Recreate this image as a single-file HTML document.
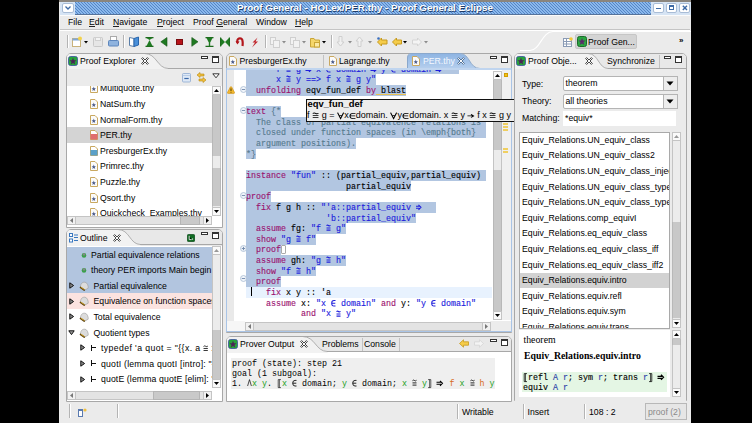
<!DOCTYPE html>
<html><head><meta charset="utf-8">
<style>
*{box-sizing:border-box}
html,body{margin:0;padding:0}
body{width:752px;height:423px;overflow:hidden;background:#000;position:relative;font-family:"Liberation Sans",sans-serif;font-size:8.7px;color:#000}
.a{position:absolute}
.t{position:absolute;white-space:nowrap;line-height:10px}
.vsep{position:absolute;width:2px;border-left:1px solid #b4b4b4;border-right:1px solid #fff}
.clip{position:absolute;overflow:hidden}
</style></head><body>
<!-- window -->
<div class="a" style="left:59px;top:0;width:632px;height:423px;background:#ebebeb"></div>
<div class="a" style="left:59px;top:0;width:632px;height:2px;background:#8a857e"></div><div class="a" style="left:60px;top:14.5px;width:630px;height:1px;background:#fbfbfb"></div>
<!-- title bar -->
<svg class="a" style="left:60px;top:2px" width="591" height="13"><defs><pattern id="tstr" patternUnits="userSpaceOnUse" width="3" height="3"><rect width="3" height="3" fill="#8ab8ec"/><path d="M-1 -1 L4 4 M-1.5 1.5 L1.5 4.5 M1.5 -1.5 L4.5 1.5" stroke="#5585c6" stroke-width="1.0"/></pattern></defs><rect width="591" height="12.5" fill="url(#tstr)"/><rect y="12" width="591" height="1" fill="#56739a"/></svg>
<div class="a" style="left:60px;top:2px;width:15px;height:12.5px;background:#d6e4f4"></div>
<div class="a" style="left:62px;top:3px;width:12px;height:10px;background:#fff;border:1px solid #a8bcd6;border-radius:2px"></div>
<svg class="a" style="left:64px;top:5px" width="8" height="6"><path d="M1.5 1.5 L4 4 L6.5 1.5" stroke="#3d6aa6" stroke-width="1.3" fill="none"/></svg>
<div class="a" style="left:651px;top:2px;width:40px;height:12.5px;background:#d6e4f4"></div>
<div class="a" style="left:653px;top:2.5px;width:11px;height:10px;background:#fff;border:1px solid #a8bcd6;border-radius:2px"></div>
<div class="a" style="left:656px;top:7.5px;width:5px;height:1.5px;background:#3d6aa6"></div>
<div class="a" style="left:666px;top:2.5px;width:11px;height:10px;background:#fff;border:1px solid #a8bcd6;border-radius:2px"></div>
<div class="a" style="left:669px;top:5px;width:5px;height:5px;border:1px solid #3d6aa6;border-top-width:2px"></div>
<div class="a" style="left:679px;top:2.5px;width:11px;height:10px;background:#fff;border:1px solid #a8bcd6;border-radius:2px"></div>
<svg class="a" style="left:681px;top:4px" width="8" height="8"><path d="M1.8 1.8 L6 6 M6 1.8 L1.8 6" stroke="#3d6aa6" stroke-width="1.4"/></svg>
<div class="t" style="left:237px;top:3px;font-weight:bold;font-size:9.8px;color:#fff;text-shadow:0.7px 0.7px 0.6px #1d3b66">Proof General - HOLex/PER.thy - Proof General Eclipse</div>

<!-- menu -->
<div class="t" style="left:68px;top:17px">File</div>
<div class="t" style="left:89px;top:17px">Edit</div>
<div class="t" style="left:113px;top:17px">Navigate</div>
<div class="t" style="left:157px;top:17px">Project</div>
<div class="t" style="left:193px;top:17px">Proof General</div>
<div class="t" style="left:256px;top:17px">Window</div>
<div class="t" style="left:295px;top:17px">Help</div>
<div class="a" style="left:60px;top:29px;width:630px;height:2px;border-top:1px solid #c4c4c4;border-bottom:1px solid #fff"></div>
<div class="a" style="left:89px;top:26px;width:5.8px;height:0.9px;background:#222"></div>
<div class="a" style="left:113px;top:26px;width:6.3px;height:0.9px;background:#222"></div>
<div class="a" style="left:157px;top:26px;width:5.8px;height:0.9px;background:#222"></div>
<div class="a" style="left:216.2px;top:26px;width:6.8px;height:0.9px;background:#222"></div>
<div class="a" style="left:295px;top:26px;width:6.3px;height:0.9px;background:#222"></div>


<!-- toolbar -->
<div class="vsep" style="left:67px;top:35px;height:13px"></div>
<svg class="a" style="left:72px;top:36px" width="18" height="11"><rect x="0.5" y="2.5" width="8" height="8" fill="#fff" stroke="#c9b27a"/><rect x="0.5" y="2.5" width="8" height="2" fill="#7ea6d8"/><circle cx="8" cy="2.5" r="2" fill="#f3d24a"/><path d="M12 5 L16 5 L14 7.5 Z" fill="#000"/></svg>
<svg class="a" style="left:93px;top:37px" width="10" height="10"><rect x="0.5" y="0.5" width="9" height="9" rx="1" fill="#e6e6e6" stroke="#c8c8c8"/><rect x="2.5" y="0.5" width="5" height="3" fill="#f4f4f4" stroke="#d0d0d0"/></svg>
<svg class="a" style="left:108px;top:36px" width="11" height="11"><rect x="2.5" y="0.5" width="6" height="5" fill="#fff" stroke="#aaa"/><rect x="0.5" y="4.5" width="10" height="5.5" rx="1" fill="#8fb3de" stroke="#5d86bd"/></svg>
<div class="vsep" style="left:123px;top:35px;height:13px"></div>
<svg class="a" style="left:129px;top:36px" width="10" height="12"><path d="M0.5 1.5 L5 2.5 L5 10.5 L0.5 9.5 Z" fill="#fff" stroke="#5a7ea8"/><path d="M5 2.5 L9.5 1 L9.5 9 L5 10.5 Z" fill="#4a90d9" stroke="#2a66ad"/></svg>
<svg class="a" style="left:145px;top:37px" width="9" height="10"><path d="M0.5 0.5 H8.5 M0.5 9.5 H8.5" stroke="#1d6b1d" stroke-width="1.4"/><path d="M1.5 9 L4.5 3 L7.5 9 Z" fill="#1f7a22"/><path d="M1.5 1 L4.5 3 L7.5 1Z" fill="#1f7a22"/></svg>
<svg class="a" style="left:160px;top:37px" width="8" height="10"><path d="M7 0.5 L0.8 4.8 L7 9.3 Z" fill="#1f7a22" stroke="#145214" stroke-width="0.6"/></svg>
<div class="a" style="left:176px;top:38.5px;width:6.5px;height:6.5px;background:#b8141a;border:0.5px solid #7a0d10"></div>
<svg class="a" style="left:191px;top:37px" width="8" height="10"><path d="M0.8 0.5 L7 4.8 L0.8 9.3 Z" fill="#1f7a22" stroke="#145214" stroke-width="0.6"/></svg>
<svg class="a" style="left:205px;top:37px" width="9" height="10"><path d="M0.5 0.5 H8.5 M0.5 9.5 H8.5" stroke="#1d6b1d" stroke-width="1.4"/><path d="M1.5 1 L4.5 7 L7.5 1 Z" fill="#1f7a22"/><path d="M3.8 6 H5.2 V9 H3.8Z" fill="#1f7a22"/></svg>
<svg class="a" style="left:220px;top:37px" width="10" height="10"><path d="M0.5 0.5 V9.5 M9.5 0.5 V9.5" stroke="#1d6b1d" stroke-width="1.4"/><path d="M1 1 L5 5 L1 9Z M9 1 L5 5 L9 9Z" fill="#1f7a22"/></svg>
<svg class="a" style="left:235px;top:37px" width="10" height="10"><path d="M2.5 6 C1.5 2 4 0.8 6 1.5 C8 2.3 8 5 7.5 9" stroke="#b3161b" stroke-width="2.2" fill="none"/><path d="M0.5 4 L2.5 7.5 L4.5 4.5Z" fill="#b3161b"/></svg>
<svg class="a" style="left:251px;top:37px" width="8" height="11"><path d="M6.5 0.5 L1.5 5.5 L4 5.5 L1 10.5 L7 4.5 L4.5 4.5 Z" fill="#c0242a"/></svg>
<div class="vsep" style="left:265px;top:35px;height:13px"></div>
<svg class="a" style="left:270px;top:37px" width="17" height="11"><rect x="0.5" y="0.5" width="5" height="7" fill="#f2f2f2" stroke="#cfcfcf"/><rect x="3.5" y="3.5" width="6" height="7" fill="#f2f2f2" stroke="#cfcfcf"/><path d="M12 4 L16 4 L14 6.5Z" fill="#8c8c8c"/></svg>
<svg class="a" style="left:290px;top:37px" width="17" height="11"><rect x="0.5" y="0.5" width="5" height="7" fill="#f2f2f2" stroke="#cfcfcf"/><rect x="3.5" y="3.5" width="6" height="7" fill="#f2f2f2" stroke="#cfcfcf"/><path d="M12 4 L16 4 L14 6.5Z" fill="#8c8c8c"/></svg>
<svg class="a" style="left:310px;top:37px" width="17" height="11"><path d="M0.5 1.5 H4 L5 3 H9.5 V10 H0.5Z" fill="#f5d66a" stroke="#c9a537"/><rect x="4.5" y="5.5" width="5" height="4.5" fill="#fbe9a6" stroke="#c9a537"/><path d="M12 4 L16 4 L14 6.5Z" fill="#000"/></svg>
<div class="vsep" style="left:331px;top:35px;height:13px"></div>
<svg class="a" style="left:336px;top:36px" width="17" height="12"><path d="M3 0.5 H6 V6 H8 L4.5 10 L1 6 H3Z" fill="#f0f0f0" stroke="#cfcfcf"/><path d="M12 5 L16 5 L14 7.5Z" fill="#8c8c8c"/></svg>
<svg class="a" style="left:355px;top:36px" width="17" height="12"><path d="M3 10.5 H6 V5 H8 L4.5 1 L1 5 H3Z" fill="#f0f0f0" stroke="#cfcfcf"/><path d="M13 5 L17 5 L15 7.5Z" fill="#8c8c8c"/></svg>
<svg class="a" style="left:377px;top:37px" width="11" height="10"><path d="M0.5 5 L4.5 1 V3 H10 V7 H4.5 V9 Z" fill="#f5cc4a" stroke="#c79a1e"/><circle cx="1.5" cy="1.5" r="1.3" fill="#3b6fc0"/></svg>
<svg class="a" style="left:392px;top:37px" width="16" height="10"><path d="M0.5 5 L4.5 1 V3 H9.5 V7 H4.5 V9 Z" fill="#f5cc4a" stroke="#c79a1e"/><path d="M11 4 L15 4 L13 6.5Z" fill="#000"/></svg>
<svg class="a" style="left:412px;top:37px" width="17" height="10"><path d="M9.5 5 L5.5 1 V3 H0.5 V7 H5.5 V9 Z" fill="#f4f4f4" stroke="#d4d4d4"/><path d="M12 4 L16 4 L14 6.5Z" fill="#8c8c8c"/></svg>
<!-- perspective bar -->
<svg class="a" style="left:520px;top:30px" width="171" height="24"><path d="M0 20.5 H10 C20 20.5 22 1.5 33 1.5 H171" stroke="#fff" stroke-width="1.1" fill="none"/></svg>
<svg class="a" style="left:563px;top:37px" width="10" height="10"><rect x="0.5" y="1.5" width="8" height="8" fill="#fff" stroke="#8a9bb5"/><path d="M0.5 4.5 H8.5 M0.5 7 H8.5 M3.5 1.5 V9.5" stroke="#8a9bb5"/><circle cx="8" cy="2" r="1.8" fill="#f3c93a"/></svg>
<div class="a" style="left:575px;top:34px;width:62px;height:15px;background:#d4d4d4;border:1px solid #c6c6c6;border-radius:2px"></div>
<svg class="a" style="left:577px;top:36px" width="10" height="11"><rect x="0.5" y="0.5" width="9" height="10" rx="2" fill="#2aa640" stroke="#1a6b2a"/><path d="M5 2 L6 4.6 L8.6 4.6 L6.5 6.3 L7.3 9 L5 7.4 L2.7 9 L3.5 6.3 L1.4 4.6 L4 4.6Z" fill="#5a2a6a"/></svg>
<div class="t" style="left:588px;top:37px">Proof Gen...</div>
<div class="t" style="left:679px;top:36px;font-size:8px;font-weight:bold">»</div>
<div class="a" style="left:65.5px;top:52.5px;width:157px;height:175px;background:#fff;border:1px solid #a8a8a8;border-radius:5px 5px 0 0"></div><div class="a" style="left:66.5px;top:53.5px;width:155px;height:15.5px;background:#e8e8e8;border-radius:4px 4px 0 0"></div><svg class="a" style="left:65.5px;top:52.5px" width="105.5" height="17.5"><path d="M1 16.5 V5 Q1 1 5 1 H79.50 C91.00 1 91.00 15.50 102.50 15.50 V17.5 H1Z" fill="#f2f2f2"/><path d="M78.50 0.5 C91.00 0.5 91.00 15.50 102.50 15.50 H105.5" stroke="#a8a8a8" stroke-width="0.9" fill="none"/></svg><div class="a" style="left:168px;top:67.5px;width:53.5px;height:1px;background:#a8a8a8"></div><svg class="a" style="left:68px;top:56px" width="10" height="10"><rect x="0.5" y="0.5" width="9" height="9" rx="2" fill="#27a23c" stroke="#3a4fa0" stroke-width="0.8"/><path d="M5 1.8 L6 4.2 L8.4 4.3 L6.5 5.9 L7.2 8.4 L5 7 L2.8 8.4 L3.5 5.9 L1.6 4.3 L4 4.2Z" fill="#4a2455"/></svg><div class="t" style="left:80px;top:54.99px;font-size:8.7px;line-height:12px;color:#000;">Proof Explorer</div><svg class="a" style="left:140.5px;top:56.5px" width="8" height="8"><path d="M0.6 1.6 L1.6 0.6 L4 3 L6.4 0.6 L7.4 1.6 L5 4 L7.4 6.4 L6.4 7.4 L4 5 L1.6 7.4 L0.6 6.4 L3 4Z" fill="#fafafa" stroke="#333" stroke-width="0.9" stroke-linejoin="round"/></svg><div class="a" style="left:200.5px;top:55.5px;width:7px;height:3px;border:1px solid #333;background:#fff"></div><div class="a" style="left:211.5px;top:55.5px;width:7px;height:7px;border:1px solid #333;border-top-width:2px;background:#fff"></div><div class="a" style="left:66.5px;top:68.5px;width:155px;height:17px;background:#ebebeb"></div><svg class="a" style="left:182px;top:72.5px" width="10" height="10"><rect x="0.5" y="0.5" width="8" height="8.5" rx="1" fill="#dde8f6" stroke="#8eaad0" stroke-width="0.8"/><path d="M0.5 2.5 H8.5" stroke="#aec4e2" stroke-width="0.8"/><path d="M2.3 5.5 H6.7" stroke="#3a68a8" stroke-width="1.2"/></svg><svg class="a" style="left:196px;top:72px" width="11" height="11"><path d="M1 3 L4 0.5 V2 H8 V4 H4 V5.5Z" fill="#f0c040" stroke="#b8860b" stroke-width="0.6"/><path d="M10 8 L7 10.5 V9 H3 V7 H7 V5.5Z" fill="#f0c040" stroke="#b8860b" stroke-width="0.6"/></svg><svg class="a" style="left:212px;top:73px" width="8" height="6"><path d="M0.8 0.8 H7.2 L4 4.8Z" fill="#fff" stroke="#222" stroke-width="0.9"/></svg><div class="clip" style="left:66.5px;top:86px;width:145px;height:129.5px;background:#fff"><svg class="a" style="left:23.5px;top:-2.5999999999999943px" width="8" height="10"><path d="M0.5 0.5 H5 L7.5 3 V9.5 H0.5Z" fill="#fbfbfb" stroke="#c9a860"/><path d="M3.8 3.5 L4.4 5.2 L6 5.3 L4.8 6.3 L5.2 8 L3.8 7 L2.4 8 L2.8 6.3 L1.6 5.3 L3.2 5.2Z" fill="#4a5a8a"/></svg><div class="t" style="left:33.5px;top:-3.61px;font-size:8.7px;line-height:12px;color:#000;">Multiquote.thy</div><svg class="a" style="left:23.5px;top:13.0px" width="8" height="10"><path d="M0.5 0.5 H5 L7.5 3 V9.5 H0.5Z" fill="#fbfbfb" stroke="#c9a860"/><path d="M3.8 3.5 L4.4 5.2 L6 5.3 L4.8 6.3 L5.2 8 L3.8 7 L2.4 8 L2.8 6.3 L1.6 5.3 L3.2 5.2Z" fill="#4a5a8a"/></svg><div class="t" style="left:33.5px;top:11.99px;font-size:8.7px;line-height:12px;color:#000;">NatSum.thy</div><svg class="a" style="left:23.5px;top:28.60000000000001px" width="8" height="10"><path d="M0.5 0.5 H5 L7.5 3 V9.5 H0.5Z" fill="#fbfbfb" stroke="#c9a860"/><path d="M3.8 3.5 L4.4 5.2 L6 5.3 L4.8 6.3 L5.2 8 L3.8 7 L2.4 8 L2.8 6.3 L1.6 5.3 L3.2 5.2Z" fill="#4a5a8a"/></svg><div class="t" style="left:33.5px;top:27.59px;font-size:8.7px;line-height:12px;color:#000;">NormalForm.thy</div><div class="a" style="left:0;top:41.0px;width:145px;height:16px;background:#d4d4d4"></div><svg class="a" style="left:23.5px;top:44.19999999999999px" width="8" height="10"><path d="M0.5 0.5 H5 L7.5 3 V9.5 H0.5Z" fill="#fff" stroke="#c9a860"/><rect x="0.5" y="4" width="7" height="5.5" fill="#e06e6e"/></svg><div class="t" style="left:33.5px;top:43.19px;font-size:8.7px;line-height:12px;color:#000;">PER.thy</div><svg class="a" style="left:23.5px;top:59.80000000000001px" width="8" height="10"><path d="M0.5 0.5 H5 L7.5 3 V9.5 H0.5Z" fill="#fff" stroke="#c9a860"/><rect x="0.5" y="4" width="7" height="5.5" fill="#5aa0c8"/></svg><div class="t" style="left:33.5px;top:58.79px;font-size:8.7px;line-height:12px;color:#000;">PresburgerEx.thy</div><svg class="a" style="left:23.5px;top:75.4px" width="8" height="10"><path d="M0.5 0.5 H5 L7.5 3 V9.5 H0.5Z" fill="#fbfbfb" stroke="#c9a860"/><path d="M3.8 3.5 L4.4 5.2 L6 5.3 L4.8 6.3 L5.2 8 L3.8 7 L2.4 8 L2.8 6.3 L1.6 5.3 L3.2 5.2Z" fill="#4a5a8a"/></svg><div class="t" style="left:33.5px;top:74.39px;font-size:8.7px;line-height:12px;color:#000;">Primrec.thy</div><svg class="a" style="left:23.5px;top:91.0px" width="8" height="10"><path d="M0.5 0.5 H5 L7.5 3 V9.5 H0.5Z" fill="#fbfbfb" stroke="#c9a860"/><path d="M3.8 3.5 L4.4 5.2 L6 5.3 L4.8 6.3 L5.2 8 L3.8 7 L2.4 8 L2.8 6.3 L1.6 5.3 L3.2 5.2Z" fill="#4a5a8a"/></svg><div class="t" style="left:33.5px;top:89.99px;font-size:8.7px;line-height:12px;color:#000;">Puzzle.thy</div><svg class="a" style="left:23.5px;top:106.60000000000002px" width="8" height="10"><path d="M0.5 0.5 H5 L7.5 3 V9.5 H0.5Z" fill="#fbfbfb" stroke="#c9a860"/><path d="M3.8 3.5 L4.4 5.2 L6 5.3 L4.8 6.3 L5.2 8 L3.8 7 L2.4 8 L2.8 6.3 L1.6 5.3 L3.2 5.2Z" fill="#4a5a8a"/></svg><div class="t" style="left:33.5px;top:105.59px;font-size:8.7px;line-height:12px;color:#000;">Qsort.thy</div><svg class="a" style="left:23.5px;top:122.19999999999999px" width="8" height="10"><path d="M0.5 0.5 H5 L7.5 3 V9.5 H0.5Z" fill="#fbfbfb" stroke="#c9a860"/><path d="M3.8 3.5 L4.4 5.2 L6 5.3 L4.8 6.3 L5.2 8 L3.8 7 L2.4 8 L2.8 6.3 L1.6 5.3 L3.2 5.2Z" fill="#4a5a8a"/></svg><div class="t" style="left:33.5px;top:121.19px;font-size:8.7px;line-height:12px;color:#000;">Quickcheck_Examples.thy</div></div><div class="a" style="left:211.5px;top:85.5px;width:9px;height:130px;background:#ececec;border:1px solid #c4c4c4"></div><div class="a" style="left:211.5px;top:94.5px;width:9px;height:61.5px;background:#c8c8c8;border-left:1px solid #b8b8b8;border-right:1px solid #b8b8b8"></div><div class="a" style="left:211.5px;top:168px;width:9px;height:38px;background:#c8c8c8;border-left:1px solid #b8b8b8;border-right:1px solid #b8b8b8"></div><div class="a" style="left:211.5px;top:85.5px;width:9px;height:9px;background:#fafafa;border:1px solid #c4c4c4"></div><div class="a" style="left:211.5px;top:206.5px;width:9px;height:9px;background:#fafafa;border:1px solid #c4c4c4"></div><svg class="a" style="left:211.5px;top:85.5px" width="9" height="9"><path d="M2 6 L4.5 3 L7 6Z" fill="#000"/></svg><svg class="a" style="left:211.5px;top:206.5px" width="9" height="9"><path d="M2 3 L4.5 6 L7 3Z" fill="#000"/></svg><div class="a" style="left:66.5px;top:216px;width:145px;height:9px;background:#e3e3e3;border:1px solid #c4c4c4"></div><div class="a" style="left:180px;top:216px;width:20px;height:9px;background:#c9c9c9;border:1px solid #b5b5b5"></div><div class="a" style="left:66.5px;top:216px;width:9px;height:9px;background:#f1f1f1;border:1px solid #c4c4c4"></div><div class="a" style="left:202.5px;top:216px;width:9px;height:9px;background:#f1f1f1;border:1px solid #c4c4c4"></div><svg class="a" style="left:66.5px;top:216px" width="9" height="9"><path d="M6 2 L3 4.5 L6 7Z" fill="#777"/></svg><svg class="a" style="left:202.5px;top:216px" width="9" height="9"><path d="M3 2 L6 4.5 L3 7Z" fill="#000"/></svg><div class="a" style="left:65.5px;top:229px;width:157px;height:172.5px;background:#fff;border:1px solid #a8a8a8;border-radius:5px 5px 0 0"></div><div class="a" style="left:66.5px;top:230px;width:155px;height:15.5px;background:#e8e8e8;border-radius:4px 4px 0 0"></div><svg class="a" style="left:65.5px;top:229px" width="77.5" height="17.5"><path d="M1 16.5 V5 Q1 1 5 1 H53.00 C63.75 1 63.75 15.50 74.50 15.50 V17.5 H1Z" fill="#f2f2f2"/><path d="M52.00 0.5 C63.75 0.5 63.75 15.50 74.50 15.50 H77.5" stroke="#a8a8a8" stroke-width="0.9" fill="none"/></svg><div class="a" style="left:140px;top:244.0px;width:81.5px;height:1px;background:#a8a8a8"></div><svg class="a" style="left:69px;top:233px" width="9" height="10"><rect x="0.5" y="0.5" width="3" height="3" fill="#fff" stroke="#3a78c0"/><rect x="0.5" y="6" width="3" height="3" fill="#fff" stroke="#3a78c0"/><path d="M5 2 H9 M5 4.5 H9 M5 7.5 H9" stroke="#3a78c0"/></svg><div class="t" style="left:80px;top:231.99px;font-size:8.7px;line-height:12px;color:#000;">Outline</div><svg class="a" style="left:113px;top:234px" width="8" height="8"><path d="M0.6 1.6 L1.6 0.6 L4 3 L6.4 0.6 L7.4 1.6 L5 4 L7.4 6.4 L6.4 7.4 L4 5 L1.6 7.4 L0.6 6.4 L3 4Z" fill="#fafafa" stroke="#333" stroke-width="0.9" stroke-linejoin="round"/></svg><svg class="a" style="left:186.5px;top:233.5px" width="8" height="8"><rect x="0.4" y="0.4" width="7.2" height="7.2" rx="1.2" fill="#0f6a22" stroke="#0a4a18" stroke-width="0.8"/><path d="M2.2 1.8 V5.6 H4.6 M5.6 4.4 V5.8" stroke="#e8f0e8" stroke-width="0.9"/></svg><div class="a" style="left:200.5px;top:232px;width:7px;height:3px;border:1px solid #333;background:#fff"></div><div class="a" style="left:211.5px;top:232px;width:7px;height:7px;border:1px solid #333;border-top-width:2px;background:#fff"></div><div class="clip" style="left:66.5px;top:245.5px;width:145px;height:142px;background:#fff"><div class="a" style="left:0;top:1.1px;width:145px;height:15.6px;background:#b2c5df"></div><svg class="a" style="left:14.5px;top:6.1px" width="6" height="6"><circle cx="3" cy="3.4" r="2.3" fill="#3aa04a"/><circle cx="3" cy="2.4" r="1.2" fill="#888"/></svg><div class="t" style="left:24.5px;top:3.09px;font-size:8.7px;line-height:12px;color:#000;">Partial equivalence relations</div><div class="a" style="left:0;top:16.7px;width:145px;height:15.6px;background:#b2c5df"></div><svg class="a" style="left:14.5px;top:21.7px" width="6" height="6"><circle cx="3" cy="3.4" r="2.3" fill="#3aa04a"/><circle cx="3" cy="2.4" r="1.2" fill="#888"/></svg><div class="t" style="left:24.5px;top:18.69px;font-size:8.7px;line-height:12px;color:#000;">theory PER imports Main begin</div><div class="a" style="left:0;top:32.3px;width:145px;height:15.6px;background:#b2c5df"></div><svg class="a" style="left:2.5px;top:36.5px" width="6" height="7"><path d="M0.8 0.8 L4.6 3.5 L0.8 6.2Z" fill="#8a8a8a" stroke="#111" stroke-width="1"/></svg><svg class="a" style="left:12.0px;top:35.3px" width="10" height="10"><path d="M1.5 6 C1.5 2 4 1 6 1.2 C8 1.5 9.5 4.5 9.2 7.2 L5.5 9.2Z" fill="#dcdcdc" stroke="#9a9a9a" stroke-width="0.6"/><path d="M1 6.2 L5.8 9.5" stroke="#5a4010" stroke-width="1.6"/><path d="M1.8 6.2 L5.6 8.6" stroke="#e8b830" stroke-width="0.8"/></svg><div class="t" style="left:27.0px;top:34.29px;font-size:8.7px;line-height:12px;color:#000;">Partial equivalence</div><div class="a" style="left:0;top:47.9px;width:145px;height:15.6px;background:#fbe3e0"></div><svg class="a" style="left:2.5px;top:52.1px" width="6" height="7"><path d="M0.8 0.8 L4.6 3.5 L0.8 6.2Z" fill="#8a8a8a" stroke="#111" stroke-width="1"/></svg><svg class="a" style="left:12.0px;top:50.9px" width="10" height="10"><path d="M1.5 6 C1.5 2 4 1 6 1.2 C8 1.5 9.5 4.5 9.2 7.2 L5.5 9.2Z" fill="#dcdcdc" stroke="#9a9a9a" stroke-width="0.6"/><path d="M1 6.2 L5.8 9.5" stroke="#5a4010" stroke-width="1.6"/><path d="M1.8 6.2 L5.6 8.6" stroke="#e8b830" stroke-width="0.8"/></svg><div class="t" style="left:27.0px;top:49.89px;font-size:8.7px;line-height:12px;color:#000;">Equivalence on function spaces</div><svg class="a" style="left:2.5px;top:67.7px" width="6" height="7"><path d="M0.8 0.8 L4.6 3.5 L0.8 6.2Z" fill="#8a8a8a" stroke="#111" stroke-width="1"/></svg><svg class="a" style="left:12.0px;top:66.5px" width="10" height="10"><path d="M1.5 6 C1.5 2 4 1 6 1.2 C8 1.5 9.5 4.5 9.2 7.2 L5.5 9.2Z" fill="#dcdcdc" stroke="#9a9a9a" stroke-width="0.6"/><path d="M1 6.2 L5.8 9.5" stroke="#5a4010" stroke-width="1.6"/><path d="M1.8 6.2 L5.6 8.6" stroke="#e8b830" stroke-width="0.8"/></svg><div class="t" style="left:27.0px;top:65.49px;font-size:8.7px;line-height:12px;color:#000;">Total equivalence</div><svg class="a" style="left:1.5px;top:84.3px" width="7" height="6"><path d="M0.8 0.8 H6.2 L3.5 4.6Z" fill="#9a9a9a" stroke="#111" stroke-width="1"/></svg><svg class="a" style="left:12.0px;top:82.1px" width="10" height="10"><path d="M1.5 6 C1.5 2 4 1 6 1.2 C8 1.5 9.5 4.5 9.2 7.2 L5.5 9.2Z" fill="#dcdcdc" stroke="#9a9a9a" stroke-width="0.6"/><path d="M1 6.2 L5.8 9.5" stroke="#5a4010" stroke-width="1.6"/><path d="M1.8 6.2 L5.6 8.6" stroke="#e8b830" stroke-width="0.8"/></svg><div class="t" style="left:27.0px;top:81.09px;font-size:8.7px;line-height:12px;color:#000;">Quotient types</div><svg class="a" style="left:13.5px;top:98.9px" width="6" height="7"><path d="M0.8 0.8 L4.6 3.5 L0.8 6.2Z" fill="#8a8a8a" stroke="#111" stroke-width="1"/></svg><div class="a" style="left:24.5px;top:99.2px;width:1px;height:6px;background:#111"></div><div class="a" style="left:24.5px;top:101.9px;width:5px;height:1px;background:#111"></div><div class="t" style="left:34.5px;top:96.69px;font-size:8.7px;line-height:12px;color:#000;letter-spacing:0.4px">typedef &#x27;a quot = &quot;{{x. a <svg style="display:inline-block;vertical-align:-1.74px;overflow:visible" width="5.39" height="9.13" viewBox="0 0 5 10" preserveAspectRatio="none"><path d="M0.5 2.7 Q1.5 1.6 2.5 2.5 Q3.5 3.4 4.5 2.3 M0.5 4.9 H4.5 M0.5 7.1 H4.5" stroke="#000" stroke-width="0.8" fill="none"/></svg> x} | a. True}&quot;</div><svg class="a" style="left:13.5px;top:114.5px" width="6" height="7"><path d="M0.8 0.8 L4.6 3.5 L0.8 6.2Z" fill="#8a8a8a" stroke="#111" stroke-width="1"/></svg><div class="a" style="left:24.5px;top:114.8px;width:1px;height:6px;background:#111"></div><div class="a" style="left:24.5px;top:117.5px;width:5px;height:1px;background:#111"></div><div class="t" style="left:34.5px;top:112.29px;font-size:8.7px;line-height:12px;color:#000;letter-spacing:0.22px">quotI (lemma quotI [intro]: &quot;{x. a <svg style="display:inline-block;vertical-align:-1.74px;overflow:visible" width="5.39" height="9.13" viewBox="0 0 5 10" preserveAspectRatio="none"><path d="M0.5 2.7 Q1.5 1.6 2.5 2.5 Q3.5 3.4 4.5 2.3 M0.5 4.9 H4.5 M0.5 7.1 H4.5" stroke="#000" stroke-width="0.8" fill="none"/></svg> x}</div><svg class="a" style="left:13.5px;top:130.1px" width="6" height="7"><path d="M0.8 0.8 L4.6 3.5 L0.8 6.2Z" fill="#8a8a8a" stroke="#111" stroke-width="1"/></svg><div class="a" style="left:24.5px;top:130.4px;width:1px;height:6px;background:#111"></div><div class="a" style="left:24.5px;top:133.1px;width:5px;height:1px;background:#111"></div><div class="t" style="left:34.5px;top:127.89px;font-size:8.7px;line-height:12px;color:#000;letter-spacing:0.12px">quotE (lemma quotE [elim]: "R</div></div><div class="a" style="left:211.5px;top:245.5px;width:9px;height:142px;background:#ececec;border:1px solid #c4c4c4"></div><div class="a" style="left:211.5px;top:329.5px;width:9px;height:49px;background:#c8c8c8;border-left:1px solid #b8b8b8;border-right:1px solid #b8b8b8"></div><div class="a" style="left:211.5px;top:245.5px;width:9px;height:9px;background:#fafafa;border:1px solid #c4c4c4"></div><div class="a" style="left:211.5px;top:378.5px;width:9px;height:9px;background:#fafafa;border:1px solid #c4c4c4"></div><svg class="a" style="left:211.5px;top:245.5px" width="9" height="9"><path d="M2 6 L4.5 3 L7 6Z" fill="#999"/></svg><svg class="a" style="left:211.5px;top:378.5px" width="9" height="9"><path d="M2 3 L4.5 6 L7 3Z" fill="#000"/></svg><div class="a" style="left:66.5px;top:390.5px;width:145px;height:9px;background:#e3e3e3;border:1px solid #c4c4c4"></div><div class="a" style="left:153px;top:390.5px;width:47px;height:9px;background:#c9c9c9;border:1px solid #b5b5b5"></div><div class="a" style="left:66.5px;top:390.5px;width:9px;height:9px;background:#f1f1f1;border:1px solid #c4c4c4"></div><div class="a" style="left:202.5px;top:390.5px;width:9px;height:9px;background:#f1f1f1;border:1px solid #c4c4c4"></div><svg class="a" style="left:66.5px;top:390.5px" width="9" height="9"><path d="M6 2 L3 4.5 L6 7Z" fill="#777"/></svg><svg class="a" style="left:202.5px;top:390.5px" width="9" height="9"><path d="M3 2 L6 4.5 L3 7Z" fill="#000"/></svg><div class="vsep" style="left:69px;top:404px;height:14px"></div><div class="vsep" style="left:117px;top:404px;height:14px"></div><svg class="a" style="left:78px;top:408px" width="10" height="9"><rect x="0.5" y="1.5" width="4" height="7" fill="#fff" stroke="#5a7ab0"/><rect x="0.5" y="1.5" width="4" height="1.5" fill="#5a7ab0"/><circle cx="7" cy="2" r="1.6" fill="#f0c040"/></svg><div class="a" style="left:225.5px;top:52.5px;width:286px;height:280px;background:#ebebeb;border:1px solid #a8a8a8;border-radius:5px 5px 0 0"></div><div class="a" style="left:226.5px;top:53.5px;width:284px;height:15px;background:#e8e8e8;border-radius:4px 4px 0 0"></div><div class="a" style="left:323px;top:55px;width:1px;height:13px;background:#c2c2c2"></div><svg class="a" style="left:229px;top:56px" width="8" height="10"><path d="M0.5 0.5 H5 L7.5 3 V9.5 H0.5Z" fill="#fbfbfb" stroke="#c9a860"/><path d="M3.8 3.5 L4.4 5.2 L6 5.3 L4.8 6.3 L5.2 8 L3.8 7 L2.4 8 L2.8 6.3 L1.6 5.3 L3.2 5.2Z" fill="#4a5a8a"/></svg><div class="t" style="left:239.5px;top:54.99px;font-size:8.7px;line-height:12px;color:#000;">PresburgerEx.thy</div><svg class="a" style="left:329px;top:56px" width="8" height="10"><path d="M0.5 0.5 H5 L7.5 3 V9.5 H0.5Z" fill="#fbfbfb" stroke="#c9a860"/><path d="M3.8 3.5 L4.4 5.2 L6 5.3 L4.8 6.3 L5.2 8 L3.8 7 L2.4 8 L2.8 6.3 L1.6 5.3 L3.2 5.2Z" fill="#4a5a8a"/></svg><div class="t" style="left:339px;top:54.99px;font-size:8.7px;line-height:12px;color:#000;">Lagrange.thy</div><svg class="a" style="left:406px;top:52.5px" width="76" height="18"><defs><linearGradient id="gt" x1="0" y1="0" x2="0" y2="1"><stop offset="0" stop-color="#8fb5e3"/><stop offset="1" stop-color="#bcd3ef"/></linearGradient></defs><path d="M1.5 17 V5 Q1.5 1 5.5 1 H54 C64 1 63 15.5 74 15.5 H76 V18 H1.5Z" fill="url(#gt)"/><path d="M1.5 15.5 V5 Q1.5 0.5 5.5 0.5 H54 C64 0.5 63 15.5 74 15.5 H76" stroke="#8aa8cc" fill="none"/></svg><svg class="a" style="left:412px;top:56px" width="8" height="10"><path d="M0.5 0.5 H5 L7.5 3 V9.5 H0.5Z" fill="#fbfbfb" stroke="#c9a860"/><path d="M3.8 3.5 L4.4 5.2 L6 5.3 L4.8 6.3 L5.2 8 L3.8 7 L2.4 8 L2.8 6.3 L1.6 5.3 L3.2 5.2Z" fill="#4a5a8a"/></svg><div class="t" style="left:423px;top:54.99px;font-size:8.7px;line-height:12px;color:#f4f8ff;">PER.thy</div><svg class="a" style="left:456.5px;top:56.5px" width="8" height="8"><path d="M0.6 1.6 L1.6 0.6 L4 3 L6.4 0.6 L7.4 1.6 L5 4 L7.4 6.4 L6.4 7.4 L4 5 L1.6 7.4 L0.6 6.4 L3 4Z" fill="#fafafa" stroke="#4a6a90" stroke-width="0.9" stroke-linejoin="round"/></svg><div class="a" style="left:489.5px;top:55.5px;width:7px;height:3px;border:1px solid #333;background:#fff"></div><div class="a" style="left:500.5px;top:55.5px;width:7px;height:7px;border:1px solid #333;border-top-width:2px;background:#fff"></div><div class="a" style="left:226.5px;top:68px;width:284px;height:1.6px;background:#c0d5ef"></div><div class="a" style="left:226.5px;top:69.6px;width:284px;height:262px;background:#fff"></div><div class="a" style="left:226px;top:68px;width:0.8px;height:264px;background:#a9c4e6"></div><div class="a" style="left:510.5px;top:68px;width:1px;height:264px;background:#a9c4e6"></div><div class="a" style="left:226px;top:331px;width:285.5px;height:1px;background:#a9c4e6"></div><div class="a" style="left:226.8px;top:69.6px;width:7px;height:251px;background:#e9e9e9"></div><div class="a" style="left:502px;top:70px;width:9px;height:250px;background:#f0f0f0"></div><div class="a" style="left:503.5px;top:73px;width:4px;height:4px;background:#f2c21a;border:0.5px solid #d19d00"></div><div class="a" style="left:503px;top:123px;width:5px;height:1.5px;background:#f0cf60"></div><div class="a" style="left:503px;top:126px;width:5px;height:1.5px;background:#f0cf60"></div><div class="a" style="left:503px;top:129px;width:5px;height:1.5px;background:#f0cf60"></div><div class="a" style="left:503px;top:148px;width:5px;height:1.5px;background:#f0cf60"></div><div class="a" style="left:503px;top:151px;width:5px;height:1.5px;background:#f0cf60"></div><div class="a" style="left:492.5px;top:70.5px;width:9px;height:249.5px;background:#ececec;border:1px solid #c4c4c4"></div><div class="a" style="left:492.5px;top:79.5px;width:9px;height:70.5px;background:#c8c8c8;border-left:1px solid #b8b8b8;border-right:1px solid #b8b8b8"></div><div class="a" style="left:492.5px;top:170px;width:9px;height:141px;background:#c8c8c8;border-left:1px solid #b8b8b8;border-right:1px solid #b8b8b8"></div><div class="a" style="left:492.5px;top:70.5px;width:9px;height:9px;background:#fafafa;border:1px solid #c4c4c4"></div><div class="a" style="left:492.5px;top:311.0px;width:9px;height:9px;background:#fafafa;border:1px solid #c4c4c4"></div><svg class="a" style="left:492.5px;top:70.5px" width="9" height="9"><path d="M2 6 L4.5 3 L7 6Z" fill="#000"/></svg><svg class="a" style="left:492.5px;top:311.0px" width="9" height="9"><path d="M2 3 L4.5 6 L7 3Z" fill="#000"/></svg><div class="a" style="left:490px;top:320.5px;width:20.5px;height:10.5px;background:#ececec"></div><div class="a" style="left:226.8px;top:320.5px;width:18.2px;height:10.5px;background:#f6f6f6"></div><div class="a" style="left:245px;top:322px;width:246px;height:9px;background:#e3e3e3;border:1px solid #c4c4c4"></div><div class="a" style="left:245px;top:322px;width:9px;height:9px;background:#f1f1f1;border:1px solid #c4c4c4"></div><div class="a" style="left:482px;top:322px;width:9px;height:9px;background:#f1f1f1;border:1px solid #c4c4c4"></div><svg class="a" style="left:245px;top:322px" width="9" height="9"><path d="M6 2 L3 4.5 L6 7Z" fill="#777"/></svg><svg class="a" style="left:482px;top:322px" width="9" height="9"><path d="M3 2 L6 4.5 L3 7Z" fill="#777"/></svg><div class="clip" style="left:234px;top:69.6px;width:258px;height:250.9px"><div class="a" style="left:0;top:-1.1px;width:258px;height:252px"><div class="a" style="left:11.5px;top:218.54px;width:246px;height:10.6px;background:#e8f2fe"></div><div class="a" style="left:11.5px;top:-4.90px;width:213.0px;height:10.69px;background:#b2c6e1"></div><div class="a" style="left:11.5px;top:5.74px;width:130.5px;height:10.69px;background:#b2c6e1"></div><div class="a" style="left:11.5px;top:16.38px;width:160.5px;height:10.69px;background:#b2c6e1"></div><div class="a" style="left:11.5px;top:37.66px;width:35.5px;height:10.69px;background:#b2c6e1"></div><div class="a" style="left:11.5px;top:48.30px;width:240.5px;height:10.69px;background:#b2c6e1"></div><div class="a" style="left:11.5px;top:58.94px;width:240.5px;height:10.69px;background:#b2c6e1"></div><div class="a" style="left:11.5px;top:69.58px;width:110.5px;height:10.69px;background:#b2c6e1"></div><div class="a" style="left:11.5px;top:80.22px;width:10.5px;height:10.69px;background:#b2c6e1"></div><div class="a" style="left:11.5px;top:101.50px;width:240.5px;height:10.69px;background:#b2c6e1"></div><div class="a" style="left:11.5px;top:112.14px;width:165.5px;height:10.69px;background:#b2c6e1"></div><div class="a" style="left:11.5px;top:122.78px;width:25.5px;height:10.69px;background:#b2c6e1"></div><div class="a" style="left:11.5px;top:133.42px;width:190.5px;height:10.69px;background:#b2c6e1"></div><div class="a" style="left:11.5px;top:144.06px;width:170.5px;height:10.69px;background:#b2c6e1"></div><div class="a" style="left:11.5px;top:154.70px;width:100.5px;height:10.69px;background:#b2c6e1"></div><div class="a" style="left:11.5px;top:165.34px;width:70.5px;height:10.69px;background:#b2c6e1"></div><div class="a" style="left:11.5px;top:175.98px;width:35.5px;height:10.69px;background:#b2c6e1"></div><div class="a" style="left:11.5px;top:186.62px;width:100.5px;height:10.69px;background:#b2c6e1"></div><div class="a" style="left:11.5px;top:197.26px;width:70.5px;height:10.69px;background:#b2c6e1"></div><div class="a" style="left:11.5px;top:207.90px;width:35.5px;height:10.69px;background:#b2c6e1"></div><div class="t" style="left:42.0px;top:-4.92px;font-size:8.33px;line-height:12px;color:#2020dc;font-family:'Liberation Mono',monospace;-webkit-text-stroke:0.12px currentColor;">f</div><svg class="a" style="left:52.00px;top:-4.70px;overflow:visible" width="5.0" height="10" viewBox="0 0 5.000 10" preserveAspectRatio="none"><path d="M0.5 2.7 Q1.5 1.6 2.5 2.5 Q3.5 3.4 4.5 2.3 M0.5 4.9 H4.5 M0.5 7.1 H4.5" stroke="#2020dc" stroke-width="1.05" fill="none"/></svg><div class="t" style="left:62.0px;top:-4.92px;font-size:8.33px;line-height:12px;color:#2020dc;font-family:'Liberation Mono',monospace;-webkit-text-stroke:0.12px currentColor;">g</div><svg class="a" style="left:72.00px;top:-4.70px;overflow:visible" width="5.0" height="10" viewBox="0 0 5.000 10" preserveAspectRatio="none"><path d="M-0.5 4.3 H4 M-0.5 6.3 H4 M3 2.8 L5.5 5.3 L3 7.8" stroke="#2020dc" stroke-width="1.3125" fill="none"/></svg><div class="t" style="left:82.0px;top:-4.92px;font-size:8.33px;line-height:12px;color:#2020dc;font-family:'Liberation Mono',monospace;-webkit-text-stroke:0.12px currentColor;">x</div><svg class="a" style="left:92.00px;top:-4.70px;overflow:visible" width="5.0" height="10" viewBox="0 0 5.000 10" preserveAspectRatio="none"><path d="M4.5 2.4 H3 Q0.7 2.4 0.7 5.2 Q0.7 8 3 8 H4.5 M0.8 5.2 H4.3" stroke="#2020dc" stroke-width="1.05" fill="none"/></svg><div class="t" style="left:102.0px;top:-4.92px;font-size:8.33px;line-height:12px;color:#2020dc;font-family:'Liberation Mono',monospace;-webkit-text-stroke:0.12px currentColor;">domain</div><svg class="a" style="left:137.00px;top:-4.70px;overflow:visible" width="5.0" height="10" viewBox="0 0 5.000 10" preserveAspectRatio="none"><path d="M-0.5 4.3 H4 M-0.5 6.3 H4 M3 2.8 L5.5 5.3 L3 7.8" stroke="#2020dc" stroke-width="1.3125" fill="none"/></svg><div class="t" style="left:147.0px;top:-4.92px;font-size:8.33px;line-height:12px;color:#2020dc;font-family:'Liberation Mono',monospace;-webkit-text-stroke:0.12px currentColor;">y</div><svg class="a" style="left:157.00px;top:-4.70px;overflow:visible" width="5.0" height="10" viewBox="0 0 5.000 10" preserveAspectRatio="none"><path d="M4.5 2.4 H3 Q0.7 2.4 0.7 5.2 Q0.7 8 3 8 H4.5 M0.8 5.2 H4.3" stroke="#2020dc" stroke-width="1.05" fill="none"/></svg><div class="t" style="left:167.0px;top:-4.92px;font-size:8.33px;line-height:12px;color:#2020dc;font-family:'Liberation Mono',monospace;-webkit-text-stroke:0.12px currentColor;">domain</div><svg class="a" style="left:202.00px;top:-4.70px;overflow:visible" width="5.0" height="10" viewBox="0 0 5.000 10" preserveAspectRatio="none"><path d="M-0.5 4.3 H4 M-0.5 6.3 H4 M3 2.8 L5.5 5.3 L3 7.8" stroke="#2020dc" stroke-width="1.3125" fill="none"/></svg><div class="t" style="left:42.0px;top:5.72px;font-size:8.33px;line-height:12px;color:#2020dc;font-family:'Liberation Mono',monospace;-webkit-text-stroke:0.12px currentColor;">x</div><svg class="a" style="left:52.00px;top:5.94px;overflow:visible" width="5.0" height="10" viewBox="0 0 5.000 10" preserveAspectRatio="none"><path d="M0.5 2.7 Q1.5 1.6 2.5 2.5 Q3.5 3.4 4.5 2.3 M0.5 4.9 H4.5 M0.5 7.1 H4.5" stroke="#2020dc" stroke-width="1.05" fill="none"/></svg><div class="t" style="left:62.0px;top:5.72px;font-size:8.33px;line-height:12px;color:#2020dc;font-family:'Liberation Mono',monospace;-webkit-text-stroke:0.12px currentColor;">y ==&gt; f x</div><svg class="a" style="left:112.00px;top:5.94px;overflow:visible" width="5.0" height="10" viewBox="0 0 5.000 10" preserveAspectRatio="none"><path d="M0.5 2.7 Q1.5 1.6 2.5 2.5 Q3.5 3.4 4.5 2.3 M0.5 4.9 H4.5 M0.5 7.1 H4.5" stroke="#2020dc" stroke-width="1.05" fill="none"/></svg><div class="t" style="left:122.0px;top:5.72px;font-size:8.33px;line-height:12px;color:#2020dc;font-family:'Liberation Mono',monospace;-webkit-text-stroke:0.12px currentColor;">g y&quot;</div><div class="t" style="left:22.0px;top:16.36px;font-size:8.33px;line-height:12px;color:#9a0f6e;font-family:'Liberation Mono',monospace;-webkit-text-stroke:0.12px currentColor;">unfolding</div><div class="t" style="left:72.0px;top:16.36px;font-size:8.33px;line-height:12px;color:#000;font-family:'Liberation Mono',monospace;-webkit-text-stroke:0.12px currentColor;">eqv_fun_def</div><div class="t" style="left:132.0px;top:16.36px;font-size:8.33px;line-height:12px;color:#9a0f6e;font-family:'Liberation Mono',monospace;-webkit-text-stroke:0.12px currentColor;">by</div><div class="t" style="left:147.0px;top:16.36px;font-size:8.33px;line-height:12px;color:#000;font-family:'Liberation Mono',monospace;-webkit-text-stroke:0.12px currentColor;">blast</div><div class="t" style="left:12.0px;top:37.64px;font-size:8.33px;line-height:12px;color:#9a0f6e;font-family:'Liberation Mono',monospace;-webkit-text-stroke:0.12px currentColor;">text</div><div class="t" style="left:37.0px;top:37.64px;font-size:8.33px;line-height:12px;color:#557a8e;font-family:'Liberation Mono',monospace;-webkit-text-stroke:0.12px currentColor;">{*</div><div class="t" style="left:22.0px;top:48.28px;font-size:8.33px;line-height:12px;color:#557a8e;font-family:'Liberation Mono',monospace;-webkit-text-stroke:0.12px currentColor;">The class of partial equivalence relations is</div><div class="t" style="left:22.0px;top:58.92px;font-size:8.33px;line-height:12px;color:#557a8e;font-family:'Liberation Mono',monospace;-webkit-text-stroke:0.12px currentColor;">closed under function spaces (in \emph{both}</div><div class="t" style="left:22.0px;top:69.56px;font-size:8.33px;line-height:12px;color:#557a8e;font-family:'Liberation Mono',monospace;-webkit-text-stroke:0.12px currentColor;">argument positions).</div><div class="t" style="left:12.0px;top:80.20px;font-size:8.33px;line-height:12px;color:#557a8e;font-family:'Liberation Mono',monospace;-webkit-text-stroke:0.12px currentColor;">*}</div><div class="t" style="left:12.0px;top:101.48px;font-size:8.33px;line-height:12px;color:#9a0f6e;font-family:'Liberation Mono',monospace;-webkit-text-stroke:0.12px currentColor;">instance</div><div class="t" style="left:57.0px;top:101.48px;font-size:8.33px;line-height:12px;color:#2020dc;font-family:'Liberation Mono',monospace;-webkit-text-stroke:0.12px currentColor;">&quot;fun&quot;</div><div class="t" style="left:87.0px;top:101.48px;font-size:8.33px;line-height:12px;color:#000;font-family:'Liberation Mono',monospace;-webkit-text-stroke:0.12px currentColor;">:: (partial_equiv,partial_equiv)</div><div class="t" style="left:112.0px;top:112.12px;font-size:8.33px;line-height:12px;color:#000;font-family:'Liberation Mono',monospace;-webkit-text-stroke:0.12px currentColor;">partial_equiv</div><div class="t" style="left:12.0px;top:122.76px;font-size:8.33px;line-height:12px;color:#9a0f6e;font-family:'Liberation Mono',monospace;-webkit-text-stroke:0.12px currentColor;">proof</div><div class="t" style="left:22.0px;top:133.40px;font-size:8.33px;line-height:12px;color:#9a0f6e;font-family:'Liberation Mono',monospace;-webkit-text-stroke:0.12px currentColor;">fix</div><div class="t" style="left:42.0px;top:133.40px;font-size:8.33px;line-height:12px;color:#000;font-family:'Liberation Mono',monospace;-webkit-text-stroke:0.12px currentColor;">f g h ::</div><div class="t" style="left:87.0px;top:133.40px;font-size:8.33px;line-height:12px;color:#2020dc;font-family:'Liberation Mono',monospace;-webkit-text-stroke:0.12px currentColor;">&quot;&#x27;a::partial_equiv</div><svg class="a" style="left:182.00px;top:133.62px;overflow:visible" width="5.0" height="10" viewBox="0 0 5.000 10" preserveAspectRatio="none"><path d="M0 4.3 H3.5 M0 6.3 H3.5 M2.5 2.8 L5 5.3 L2.5 7.8" stroke="#2020dc" stroke-width="1.05" fill="none"/></svg><div class="t" style="left:92.0px;top:144.04px;font-size:8.33px;line-height:12px;color:#2020dc;font-family:'Liberation Mono',monospace;-webkit-text-stroke:0.12px currentColor;">&#x27;b::partial_equiv&quot;</div><div class="t" style="left:22.0px;top:154.68px;font-size:8.33px;line-height:12px;color:#9a0f6e;font-family:'Liberation Mono',monospace;-webkit-text-stroke:0.12px currentColor;">assume</div><div class="t" style="left:57.0px;top:154.68px;font-size:8.33px;line-height:12px;color:#000;font-family:'Liberation Mono',monospace;-webkit-text-stroke:0.12px currentColor;">fg:</div><div class="t" style="left:77.0px;top:154.68px;font-size:8.33px;line-height:12px;color:#2020dc;font-family:'Liberation Mono',monospace;-webkit-text-stroke:0.12px currentColor;">&quot;f</div><svg class="a" style="left:92.00px;top:154.90px;overflow:visible" width="5.0" height="10" viewBox="0 0 5.000 10" preserveAspectRatio="none"><path d="M0.5 2.7 Q1.5 1.6 2.5 2.5 Q3.5 3.4 4.5 2.3 M0.5 4.9 H4.5 M0.5 7.1 H4.5" stroke="#2020dc" stroke-width="1.05" fill="none"/></svg><div class="t" style="left:102.0px;top:154.68px;font-size:8.33px;line-height:12px;color:#2020dc;font-family:'Liberation Mono',monospace;-webkit-text-stroke:0.12px currentColor;">g&quot;</div><div class="t" style="left:22.0px;top:165.32px;font-size:8.33px;line-height:12px;color:#9a0f6e;font-family:'Liberation Mono',monospace;-webkit-text-stroke:0.12px currentColor;">show</div><div class="t" style="left:47.0px;top:165.32px;font-size:8.33px;line-height:12px;color:#2020dc;font-family:'Liberation Mono',monospace;-webkit-text-stroke:0.12px currentColor;">&quot;g</div><svg class="a" style="left:62.00px;top:165.54px;overflow:visible" width="5.0" height="10" viewBox="0 0 5.000 10" preserveAspectRatio="none"><path d="M0.5 2.7 Q1.5 1.6 2.5 2.5 Q3.5 3.4 4.5 2.3 M0.5 4.9 H4.5 M0.5 7.1 H4.5" stroke="#2020dc" stroke-width="1.05" fill="none"/></svg><div class="t" style="left:72.0px;top:165.32px;font-size:8.33px;line-height:12px;color:#2020dc;font-family:'Liberation Mono',monospace;-webkit-text-stroke:0.12px currentColor;">f&quot;</div><div class="t" style="left:22.0px;top:175.96px;font-size:8.33px;line-height:12px;color:#9a0f6e;font-family:'Liberation Mono',monospace;-webkit-text-stroke:0.12px currentColor;">proof</div><div class="t" style="left:22.0px;top:186.60px;font-size:8.33px;line-height:12px;color:#9a0f6e;font-family:'Liberation Mono',monospace;-webkit-text-stroke:0.12px currentColor;">assume</div><div class="t" style="left:57.0px;top:186.60px;font-size:8.33px;line-height:12px;color:#000;font-family:'Liberation Mono',monospace;-webkit-text-stroke:0.12px currentColor;">gh:</div><div class="t" style="left:77.0px;top:186.60px;font-size:8.33px;line-height:12px;color:#2020dc;font-family:'Liberation Mono',monospace;-webkit-text-stroke:0.12px currentColor;">&quot;g</div><svg class="a" style="left:92.00px;top:186.82px;overflow:visible" width="5.0" height="10" viewBox="0 0 5.000 10" preserveAspectRatio="none"><path d="M0.5 2.7 Q1.5 1.6 2.5 2.5 Q3.5 3.4 4.5 2.3 M0.5 4.9 H4.5 M0.5 7.1 H4.5" stroke="#2020dc" stroke-width="1.05" fill="none"/></svg><div class="t" style="left:102.0px;top:186.60px;font-size:8.33px;line-height:12px;color:#2020dc;font-family:'Liberation Mono',monospace;-webkit-text-stroke:0.12px currentColor;">h&quot;</div><div class="t" style="left:22.0px;top:197.24px;font-size:8.33px;line-height:12px;color:#9a0f6e;font-family:'Liberation Mono',monospace;-webkit-text-stroke:0.12px currentColor;">show</div><div class="t" style="left:47.0px;top:197.24px;font-size:8.33px;line-height:12px;color:#2020dc;font-family:'Liberation Mono',monospace;-webkit-text-stroke:0.12px currentColor;">&quot;f</div><svg class="a" style="left:62.00px;top:197.46px;overflow:visible" width="5.0" height="10" viewBox="0 0 5.000 10" preserveAspectRatio="none"><path d="M0.5 2.7 Q1.5 1.6 2.5 2.5 Q3.5 3.4 4.5 2.3 M0.5 4.9 H4.5 M0.5 7.1 H4.5" stroke="#2020dc" stroke-width="1.05" fill="none"/></svg><div class="t" style="left:72.0px;top:197.24px;font-size:8.33px;line-height:12px;color:#2020dc;font-family:'Liberation Mono',monospace;-webkit-text-stroke:0.12px currentColor;">h&quot;</div><div class="t" style="left:22.0px;top:207.88px;font-size:8.33px;line-height:12px;color:#9a0f6e;font-family:'Liberation Mono',monospace;-webkit-text-stroke:0.12px currentColor;">proof</div><div class="t" style="left:32.0px;top:218.52px;font-size:8.33px;line-height:12px;color:#9a0f6e;font-family:'Liberation Mono',monospace;-webkit-text-stroke:0.12px currentColor;">fix</div><div class="t" style="left:52.0px;top:218.52px;font-size:8.33px;line-height:12px;color:#000;font-family:'Liberation Mono',monospace;-webkit-text-stroke:0.12px currentColor;">x y :: &#x27;a</div><div class="t" style="left:32.0px;top:229.16px;font-size:8.33px;line-height:12px;color:#9a0f6e;font-family:'Liberation Mono',monospace;-webkit-text-stroke:0.12px currentColor;">assume</div><div class="t" style="left:67.0px;top:229.16px;font-size:8.33px;line-height:12px;color:#000;font-family:'Liberation Mono',monospace;-webkit-text-stroke:0.12px currentColor;">x:</div><div class="t" style="left:82.0px;top:229.16px;font-size:8.33px;line-height:12px;color:#2020dc;font-family:'Liberation Mono',monospace;-webkit-text-stroke:0.12px currentColor;">&quot;x</div><svg class="a" style="left:97.00px;top:229.38px;overflow:visible" width="5.0" height="10" viewBox="0 0 5.000 10" preserveAspectRatio="none"><path d="M4.5 2.4 H3 Q0.7 2.4 0.7 5.2 Q0.7 8 3 8 H4.5 M0.8 5.2 H4.3" stroke="#2020dc" stroke-width="1.05" fill="none"/></svg><div class="t" style="left:107.0px;top:229.16px;font-size:8.33px;line-height:12px;color:#2020dc;font-family:'Liberation Mono',monospace;-webkit-text-stroke:0.12px currentColor;">domain&quot;</div><div class="t" style="left:147.0px;top:229.16px;font-size:8.33px;line-height:12px;color:#9a0f6e;font-family:'Liberation Mono',monospace;-webkit-text-stroke:0.12px currentColor;">and</div><div class="t" style="left:167.0px;top:229.16px;font-size:8.33px;line-height:12px;color:#000;font-family:'Liberation Mono',monospace;-webkit-text-stroke:0.12px currentColor;">y:</div><div class="t" style="left:182.0px;top:229.16px;font-size:8.33px;line-height:12px;color:#2020dc;font-family:'Liberation Mono',monospace;-webkit-text-stroke:0.12px currentColor;">&quot;y</div><svg class="a" style="left:197.00px;top:229.38px;overflow:visible" width="5.0" height="10" viewBox="0 0 5.000 10" preserveAspectRatio="none"><path d="M4.5 2.4 H3 Q0.7 2.4 0.7 5.2 Q0.7 8 3 8 H4.5 M0.8 5.2 H4.3" stroke="#2020dc" stroke-width="1.05" fill="none"/></svg><div class="t" style="left:207.0px;top:229.16px;font-size:8.33px;line-height:12px;color:#2020dc;font-family:'Liberation Mono',monospace;-webkit-text-stroke:0.12px currentColor;">domain&quot;</div><div class="t" style="left:67.0px;top:239.80px;font-size:8.33px;line-height:12px;color:#9a0f6e;font-family:'Liberation Mono',monospace;-webkit-text-stroke:0.12px currentColor;">and</div><div class="t" style="left:87.0px;top:239.80px;font-size:8.33px;line-height:12px;color:#2020dc;font-family:'Liberation Mono',monospace;-webkit-text-stroke:0.12px currentColor;">&quot;x</div><svg class="a" style="left:102.00px;top:240.02px;overflow:visible" width="5.0" height="10" viewBox="0 0 5.000 10" preserveAspectRatio="none"><path d="M0.5 2.7 Q1.5 1.6 2.5 2.5 Q3.5 3.4 4.5 2.3 M0.5 4.9 H4.5 M0.5 7.1 H4.5" stroke="#2020dc" stroke-width="1.05" fill="none"/></svg><div class="t" style="left:112.0px;top:239.80px;font-size:8.33px;line-height:12px;color:#2020dc;font-family:'Liberation Mono',monospace;-webkit-text-stroke:0.12px currentColor;">y&quot;</div><div class="a" style="left:16.5px;top:218.5px;width:1.2px;height:9px;background:#000"></div><div class="a" style="left:47px;top:176.5px;width:5px;height:9px;background:#fff;border:0.5px solid #aaa;border-radius:1px"></div><div class="a" style="left:142px;top:25.099999999999994px;width:30px;height:1px;background:#e8c050"></div></div></div><svg class="a" style="left:239.5px;top:85.8px" width="7" height="7"><circle cx="3.5" cy="3.5" r="3" fill="#f0f4fa" stroke="#a9bbd2" stroke-width="0.8"/><path d="M1.8 3.5 H5.2" stroke="#6f88aa" stroke-width="0.9"/></svg><svg class="a" style="left:239.5px;top:106.8px" width="7" height="7"><circle cx="3.5" cy="3.5" r="3" fill="#f0f4fa" stroke="#a9bbd2" stroke-width="0.8"/><path d="M1.8 3.5 H5.2" stroke="#6f88aa" stroke-width="0.9"/></svg><svg class="a" style="left:239.5px;top:191.8px" width="7" height="7"><circle cx="3.5" cy="3.5" r="3" fill="#f0f4fa" stroke="#a9bbd2" stroke-width="0.8"/><path d="M1.8 3.5 H5.2" stroke="#6f88aa" stroke-width="0.9"/></svg><svg class="a" style="left:239.5px;top:244.8px" width="7" height="7"><circle cx="3.5" cy="3.5" r="3" fill="#f0f4fa" stroke="#a9bbd2" stroke-width="0.8"/><path d="M1.8 3.5 H5.2" stroke="#6f88aa" stroke-width="0.9"/><path d="M3.5 1.8 V5.2" stroke="#6f88aa" stroke-width="0.9"/></svg><svg class="a" style="left:239.5px;top:275.3px" width="7" height="7"><circle cx="3.5" cy="3.5" r="3" fill="#f0f4fa" stroke="#a9bbd2" stroke-width="0.8"/><path d="M1.8 3.5 H5.2" stroke="#6f88aa" stroke-width="0.9"/></svg><svg class="a" style="left:227px;top:85.5px" width="8" height="8"><path d="M4 0.6 Q4.4 0.6 4.8 1.3 L7.5 6.4 Q7.8 7.4 6.8 7.4 H1.2 Q0.2 7.4 0.5 6.4 L3.2 1.3 Q3.6 0.6 4 0.6Z" fill="#f3b92c" stroke="#c98a10" stroke-width="0.6"/><path d="M4 2.4 V5 M4 5.8 V6.6" stroke="#3a2a00" stroke-width="0.9"/></svg><div class="a" style="left:305.5px;top:98.5px;width:209.5px;height:23.5px;background:#ededed;border:1px solid #111"></div><div class="t" style="left:307.5px;top:98.44px;font-size:9.4px;line-height:12px;color:#000;font-weight:bold">eqv_fun_def</div><div class="t" style="left:307px;top:109.28px;font-size:9.0px;line-height:12px;color:#000;">f <svg style="display:inline-block;vertical-align:-1.80px;overflow:visible" width="7.20" height="9.45" viewBox="0 0 5 10" preserveAspectRatio="none"><path d="M0.5 2.7 Q1.5 1.6 2.5 2.5 Q3.5 3.4 4.5 2.3 M0.5 4.9 H4.5 M0.5 7.1 H4.5" stroke="#000" stroke-width="0.8" fill="none"/></svg> g = <svg style="display:inline-block;vertical-align:-1.80px;overflow:visible" width="7.20" height="9.45" viewBox="0 0 5 10" preserveAspectRatio="none"><path d="M0.4 1.8 L2.5 8 L4.6 1.8 M1.3 4.8 H3.7" stroke="#000" stroke-width="0.8" fill="none"/></svg>x<svg style="display:inline-block;vertical-align:-1.80px;overflow:visible" width="7.20" height="9.45" viewBox="0 0 5 10" preserveAspectRatio="none"><path d="M4.5 2.4 H3 Q0.7 2.4 0.7 5.2 Q0.7 8 3 8 H4.5 M0.8 5.2 H4.3" stroke="#000" stroke-width="0.8" fill="none"/></svg>domain. <svg style="display:inline-block;vertical-align:-1.80px;overflow:visible" width="7.20" height="9.45" viewBox="0 0 5 10" preserveAspectRatio="none"><path d="M0.4 1.8 L2.5 8 L4.6 1.8 M1.3 4.8 H3.7" stroke="#000" stroke-width="0.8" fill="none"/></svg>y<svg style="display:inline-block;vertical-align:-1.80px;overflow:visible" width="7.20" height="9.45" viewBox="0 0 5 10" preserveAspectRatio="none"><path d="M4.5 2.4 H3 Q0.7 2.4 0.7 5.2 Q0.7 8 3 8 H4.5 M0.8 5.2 H4.3" stroke="#000" stroke-width="0.8" fill="none"/></svg>domain. x <svg style="display:inline-block;vertical-align:-1.80px;overflow:visible" width="7.20" height="9.45" viewBox="0 0 5 10" preserveAspectRatio="none"><path d="M0.5 2.7 Q1.5 1.6 2.5 2.5 Q3.5 3.4 4.5 2.3 M0.5 4.9 H4.5 M0.5 7.1 H4.5" stroke="#000" stroke-width="0.8" fill="none"/></svg> y <svg style="display:inline-block;vertical-align:-1.80px;overflow:visible" width="7.20" height="9.45" viewBox="0 0 5 10" preserveAspectRatio="none"><path d="M0.3 5.2 H4.4 M2.8 3.6 L4.6 5.2 L2.8 6.8" stroke="#000" stroke-width="0.8" fill="none"/></svg> f x <svg style="display:inline-block;vertical-align:-1.80px;overflow:visible" width="7.20" height="9.45" viewBox="0 0 5 10" preserveAspectRatio="none"><path d="M0.5 2.7 Q1.5 1.6 2.5 2.5 Q3.5 3.4 4.5 2.3 M0.5 4.9 H4.5 M0.5 7.1 H4.5" stroke="#000" stroke-width="0.8" fill="none"/></svg> g y</div><div class="a" style="left:225.5px;top:335.5px;width:286px;height:66px;background:#fff;border:1px solid #a8a8a8;border-radius:5px 5px 0 0"></div><div class="a" style="left:226.5px;top:336.5px;width:284px;height:15.5px;background:#e8e8e8;border-radius:4px 4px 0 0"></div><svg class="a" style="left:225.5px;top:335.5px" width="104.5" height="17.5"><path d="M1 16.5 V5 Q1 1 5 1 H77.50 C89.50 1 89.50 15.50 101.50 15.50 V17.5 H1Z" fill="#f2f2f2"/><path d="M76.50 0.5 C89.50 0.5 89.50 15.50 101.50 15.50 H104.5" stroke="#a8a8a8" stroke-width="0.9" fill="none"/></svg><div class="a" style="left:327px;top:350.5px;width:183.5px;height:1px;background:#a8a8a8"></div><svg class="a" style="left:228px;top:339px" width="10" height="10"><rect x="0.5" y="0.5" width="9" height="9" rx="2" fill="#27a23c" stroke="#3a4fa0" stroke-width="0.8"/><path d="M5 1.8 L6 4.2 L8.4 4.3 L6.5 5.9 L7.2 8.4 L5 7 L2.8 8.4 L3.5 5.9 L1.6 4.3 L4 4.2Z" fill="#4a2455"/></svg><div class="t" style="left:240px;top:338.49px;font-size:8.7px;line-height:12px;color:#000;">Prover Output</div><svg class="a" style="left:299.5px;top:339.5px" width="8" height="8"><path d="M0.6 1.6 L1.6 0.6 L4 3 L6.4 0.6 L7.4 1.6 L5 4 L7.4 6.4 L6.4 7.4 L4 5 L1.6 7.4 L0.6 6.4 L3 4Z" fill="#fafafa" stroke="#333" stroke-width="0.9" stroke-linejoin="round"/></svg><div class="a" style="left:361.5px;top:338px;width:1px;height:13px;background:#c2c2c2"></div><div class="a" style="left:398.5px;top:338px;width:1px;height:13px;background:#c2c2c2"></div><div class="t" style="left:322px;top:338.49px;font-size:8.7px;line-height:12px;color:#000;">Problems</div><div class="t" style="left:364px;top:338.49px;font-size:8.7px;line-height:12px;color:#000;">Console</div><svg class="a" style="left:459px;top:339px" width="10" height="9"><path d="M0.5 4.5 L4.5 0.8 V2.8 H9.5 V6.2 H4.5 V8.2Z" fill="#f5cc4a" stroke="#c79a1e" stroke-width="0.8"/></svg><svg class="a" style="left:474px;top:339px" width="10" height="9"><path d="M9.5 4.5 L5.5 0.8 V2.8 H0.5 V6.2 H5.5 V8.2Z" fill="#f4f4f4" stroke="#d4d4d4" stroke-width="0.8"/></svg><div class="a" style="left:489.5px;top:338.5px;width:7px;height:3px;border:1px solid #333;background:#fff"></div><div class="a" style="left:500.5px;top:338.5px;width:7px;height:7px;border:1px solid #333;border-top-width:2px;background:#fff"></div><div class="a" style="left:231px;top:358px;width:264px;height:30.5px;background:#efefef"></div><div class="t" style="left:232.0px;top:357.78px;font-size:8.33px;line-height:12px;color:#000;font-family:'Liberation Mono',monospace;">proof (state): step 21</div><div class="t" style="left:232.0px;top:367.98px;font-size:8.33px;line-height:12px;color:#000;font-family:'Liberation Mono',monospace;">goal (1 subgoal):</div><div class="t" style="left:232.0px;top:378.18px;font-size:8.33px;line-height:12px;color:#000;font-family:'Liberation Mono',monospace;">1.</div><svg class="a" style="left:247.00px;top:378.40px;overflow:visible" width="5.0" height="10" viewBox="0 0 5.000 10" preserveAspectRatio="none"><path d="M0.6 8 L2.5 1.6 L4.4 8" stroke="#000" stroke-width="0.68" fill="none"/></svg><div class="t" style="left:252.0px;top:378.18px;font-size:8.33px;line-height:12px;color:#22a022;font-family:'Liberation Mono',monospace;">x</div><div class="t" style="left:262.0px;top:378.18px;font-size:8.33px;line-height:12px;color:#22a022;font-family:'Liberation Mono',monospace;">y</div><div class="t" style="left:267.0px;top:378.18px;font-size:8.33px;line-height:12px;color:#000;font-family:'Liberation Mono',monospace;">.</div><svg class="a" style="left:277.00px;top:378.40px;overflow:visible" width="5.0" height="10" viewBox="0 0 5.000 10" preserveAspectRatio="none"><path d="M4 1.6 H1.2 V9.6 H4 M2.4 1.6 V9.6" stroke="#000" stroke-width="0.595" fill="none"/></svg><div class="t" style="left:282.0px;top:378.18px;font-size:8.33px;line-height:12px;color:#22a022;font-family:'Liberation Mono',monospace;">x</div><svg class="a" style="left:292.00px;top:378.40px;overflow:visible" width="5.0" height="10" viewBox="0 0 5.000 10" preserveAspectRatio="none"><path d="M4.5 2.4 H3 Q0.7 2.4 0.7 5.2 Q0.7 8 3 8 H4.5 M0.8 5.2 H4.3" stroke="#000" stroke-width="0.85" fill="none"/></svg><div class="t" style="left:302.0px;top:378.18px;font-size:8.33px;line-height:12px;color:#000;font-family:'Liberation Mono',monospace;">domain;</div><div class="t" style="left:342.0px;top:378.18px;font-size:8.33px;line-height:12px;color:#22a022;font-family:'Liberation Mono',monospace;">y</div><svg class="a" style="left:352.00px;top:378.40px;overflow:visible" width="5.0" height="10" viewBox="0 0 5.000 10" preserveAspectRatio="none"><path d="M4.5 2.4 H3 Q0.7 2.4 0.7 5.2 Q0.7 8 3 8 H4.5 M0.8 5.2 H4.3" stroke="#000" stroke-width="0.85" fill="none"/></svg><div class="t" style="left:362.0px;top:378.18px;font-size:8.33px;line-height:12px;color:#000;font-family:'Liberation Mono',monospace;">domain;</div><div class="t" style="left:402.0px;top:378.18px;font-size:8.33px;line-height:12px;color:#22a022;font-family:'Liberation Mono',monospace;">x</div><svg class="a" style="left:412.00px;top:378.40px;overflow:visible" width="5.0" height="10" viewBox="0 0 5.000 10" preserveAspectRatio="none"><path d="M0.5 2.7 Q1.5 1.6 2.5 2.5 Q3.5 3.4 4.5 2.3 M0.5 4.9 H4.5 M0.5 7.1 H4.5" stroke="#000" stroke-width="0.85" fill="none"/></svg><div class="t" style="left:422.0px;top:378.18px;font-size:8.33px;line-height:12px;color:#22a022;font-family:'Liberation Mono',monospace;">y</div><svg class="a" style="left:427.00px;top:378.40px;overflow:visible" width="5.0" height="10" viewBox="0 0 5.000 10" preserveAspectRatio="none"><path d="M1 1.6 H3.8 V9.6 H1 M2.6 1.6 V9.6" stroke="#000" stroke-width="0.595" fill="none"/></svg><svg class="a" style="left:437.00px;top:378.40px;overflow:visible" width="5.0" height="10" viewBox="0 0 5.000 10" preserveAspectRatio="none"><path d="M-0.5 4.3 H4 M-0.5 6.3 H4 M3 2.8 L5.5 5.3 L3 7.8" stroke="#000" stroke-width="1.0625" fill="none"/></svg><div class="t" style="left:449.5px;top:378.18px;font-size:8.33px;line-height:12px;color:#d86a1a;font-family:'Liberation Mono',monospace;">f</div><div class="t" style="left:459.5px;top:378.18px;font-size:8.33px;line-height:12px;color:#22a022;font-family:'Liberation Mono',monospace;">x</div><svg class="a" style="left:469.50px;top:378.40px;overflow:visible" width="5.0" height="10" viewBox="0 0 5.000 10" preserveAspectRatio="none"><path d="M0.5 2.7 Q1.5 1.6 2.5 2.5 Q3.5 3.4 4.5 2.3 M0.5 4.9 H4.5 M0.5 7.1 H4.5" stroke="#000" stroke-width="0.85" fill="none"/></svg><div class="t" style="left:479.5px;top:378.18px;font-size:8.33px;line-height:12px;color:#d86a1a;font-family:'Liberation Mono',monospace;">h</div><div class="t" style="left:489.5px;top:378.18px;font-size:8.33px;line-height:12px;color:#22a022;font-family:'Liberation Mono',monospace;">y</div><div class="a" style="left:514px;top:53px;width:172.5px;height:348px;background:#fff;border:1px solid #a8a8a8;border-radius:5px 5px 0 0"></div><div class="a" style="left:515px;top:54px;width:170.5px;height:15.5px;background:#e8e8e8;border-radius:4px 4px 0 0"></div><svg class="a" style="left:514px;top:53px" width="97.0" height="17.5"><path d="M1 16.5 V5 Q1 1 5 1 H75.00 C84.50 1 84.50 15.50 94.00 15.50 V17.5 H1Z" fill="#f2f2f2"/><path d="M74.00 0.5 C84.50 0.5 84.50 15.50 94.00 15.50 H97.0" stroke="#a8a8a8" stroke-width="0.9" fill="none"/></svg><div class="a" style="left:608px;top:68.0px;width:77.5px;height:1px;background:#a8a8a8"></div><div class="a" style="left:658.5px;top:55px;width:1px;height:13px;background:#c2c2c2"></div><svg class="a" style="left:516px;top:56px" width="10" height="10"><rect x="0.5" y="0.5" width="9" height="9" rx="2" fill="#27a23c" stroke="#3a4fa0" stroke-width="0.8"/><path d="M5 1.8 L6 4.2 L8.4 4.3 L6.5 5.9 L7.2 8.4 L5 7 L2.8 8.4 L3.5 5.9 L1.6 4.3 L4 4.2Z" fill="#4a2455"/></svg><div class="t" style="left:528px;top:55.49px;font-size:8.7px;line-height:12px;color:#000;">Proof Obje...</div><svg class="a" style="left:584.5px;top:57px" width="8" height="8"><path d="M0.6 1.6 L1.6 0.6 L4 3 L6.4 0.6 L7.4 1.6 L5 4 L7.4 6.4 L6.4 7.4 L4 5 L1.6 7.4 L0.6 6.4 L3 4Z" fill="#fafafa" stroke="#333" stroke-width="0.9" stroke-linejoin="round"/></svg><div class="t" style="left:607px;top:55.49px;font-size:8.7px;line-height:12px;color:#000;">Synchronize</div><div class="a" style="left:663.5px;top:56px;width:7px;height:3px;border:1px solid #333;background:#fff"></div><div class="a" style="left:674.5px;top:56px;width:7px;height:7px;border:1px solid #333;border-top-width:2px;background:#fff"></div><div class="a" style="left:515px;top:69px;width:170.5px;height:331.5px;background:#ebebeb"></div><div class="t" style="left:522px;top:78.49px;font-size:8.7px;line-height:12px;color:#000;">Type:</div><div class="t" style="left:522px;top:95.49px;font-size:8.7px;line-height:12px;color:#000;">Theory:</div><div class="t" style="left:522px;top:112.49px;font-size:8.7px;line-height:12px;color:#000;">Matching:</div><div class="a" style="left:563px;top:76px;width:114.5px;height:14.5px;background:#fff;border:1px solid #b4b4b4;border-radius:2px"></div><div class="a" style="left:663px;top:76px;width:14.5px;height:14.5px;background:#ededed;border:1px solid #b4b4b4"></div><svg class="a" style="left:666px;top:81px" width="8" height="5"><path d="M0.5 0.5 H7.5 L4 4.5Z" fill="#000"/></svg><div class="t" style="left:565.5px;top:77.49px;font-size:8.7px;line-height:12px;color:#000;">theorem</div><div class="a" style="left:563px;top:94px;width:114.5px;height:14.5px;background:#fff;border:1px solid #b4b4b4;border-radius:2px"></div><div class="a" style="left:663px;top:94px;width:14.5px;height:14.5px;background:#ededed;border:1px solid #b4b4b4"></div><svg class="a" style="left:666px;top:99px" width="8" height="5"><path d="M0.5 0.5 H7.5 L4 4.5Z" fill="#000"/></svg><div class="t" style="left:565.5px;top:95.49px;font-size:8.7px;line-height:12px;color:#000;">all theories</div><div class="a" style="left:563px;top:111px;width:112.5px;height:14.5px;background:#fff"></div><div class="t" style="left:565px;top:112.49px;font-size:8.7px;line-height:12px;color:#000;">*equiv*</div><div class="a" style="left:518.5px;top:131.5px;width:151.5px;height:197px;background:#fff;border:1px solid #a9a9a9"></div><div class="clip" style="left:519.5px;top:132.5px;width:149.5px;height:195px"><div class="t" style="left:2.5px;top:1.29px;font-size:8.7px;line-height:12px;color:#000;">Equiv_Relations.UN_equiv_class</div><div class="t" style="left:2.5px;top:16.89px;font-size:8.7px;line-height:12px;color:#000;">Equiv_Relations.UN_equiv_class2</div><div class="t" style="left:2.5px;top:32.49px;font-size:8.7px;line-height:12px;color:#000;">Equiv_Relations.UN_equiv_class_inject</div><div class="t" style="left:2.5px;top:48.09px;font-size:8.7px;line-height:12px;color:#000;">Equiv_Relations.UN_equiv_class_type</div><div class="t" style="left:2.5px;top:63.69px;font-size:8.7px;line-height:12px;color:#000;">Equiv_Relations.UN_equiv_class_type2</div><div class="t" style="left:2.5px;top:79.29px;font-size:8.7px;line-height:12px;color:#000;">Equiv_Relations.comp_equivI</div><div class="t" style="left:2.5px;top:94.89px;font-size:8.7px;line-height:12px;color:#000;">Equiv_Relations.eq_equiv_class</div><div class="t" style="left:2.5px;top:110.49px;font-size:8.7px;line-height:12px;color:#000;">Equiv_Relations.eq_equiv_class_iff</div><div class="t" style="left:2.5px;top:126.09px;font-size:8.7px;line-height:12px;color:#000;">Equiv_Relations.eq_equiv_class_iff2</div><div class="a" style="left:0;top:140.1px;width:150px;height:15.2px;background:#d2d2d2"></div><div class="t" style="left:2.5px;top:141.69px;font-size:8.7px;line-height:12px;color:#000;">Equiv_Relations.equiv.intro</div><div class="t" style="left:2.5px;top:157.29px;font-size:8.7px;line-height:12px;color:#000;">Equiv_Relations.equiv.refl</div><div class="t" style="left:2.5px;top:172.89px;font-size:8.7px;line-height:12px;color:#000;">Equiv_Relations.equiv.sym</div><div class="t" style="left:2.5px;top:188.49px;font-size:8.7px;line-height:12px;color:#000;">Equiv_Relations.equiv.trans</div></div><div class="a" style="left:672px;top:131.5px;width:9px;height:196px;background:#ececec;border:1px solid #c4c4c4"></div><div class="a" style="left:672px;top:222px;width:9px;height:96px;background:#c8c8c8;border-left:1px solid #b8b8b8;border-right:1px solid #b8b8b8"></div><div class="a" style="left:672px;top:131.5px;width:9px;height:9px;background:#fafafa;border:1px solid #c4c4c4"></div><div class="a" style="left:672px;top:318.5px;width:9px;height:9px;background:#fafafa;border:1px solid #c4c4c4"></div><svg class="a" style="left:672px;top:131.5px" width="9" height="9"><path d="M2 6 L4.5 3 L7 6Z" fill="#999"/></svg><svg class="a" style="left:672px;top:318.5px" width="9" height="9"><path d="M2 3 L4.5 6 L7 3Z" fill="#000"/></svg><div class="a" style="left:518.5px;top:330px;width:151.5px;height:66.5px;background:#fff"></div><div class="t" style="left:523.5px;top:333.69px;font-size:9.8px;line-height:12px;color:#000;font-family:'Liberation Serif',serif;">theorem</div><div class="t" style="left:524px;top:349.69px;font-size:9.8px;line-height:12px;color:#000;font-family:'Liberation Serif',serif;font-weight:bold">Equiv_Relations.equiv.intro</div><div class="a" style="left:521.5px;top:371.5px;width:145.5px;height:20px;background:#e4f6e4"></div><svg class="a" style="left:523.00px;top:372.00px;overflow:visible" width="5.0" height="10" viewBox="0 0 5.000 10" preserveAspectRatio="none"><path d="M4 1.6 H1.2 V9.6 H4 M2.4 1.6 V9.6" stroke="#000" stroke-width="0.735" fill="none"/></svg><div class="t" style="left:528.0px;top:371.78px;font-size:8.33px;line-height:12px;color:#000;font-family:'Liberation Mono',monospace;-webkit-text-stroke:0.12px currentColor;">refl</div><div class="t" style="left:553.0px;top:371.78px;font-size:8.33px;line-height:12px;color:#2a3fa8;font-family:'Liberation Mono',monospace;-webkit-text-stroke:0.12px currentColor;">A</div><div class="t" style="left:563.0px;top:371.78px;font-size:8.33px;line-height:12px;color:#2a3fa8;font-family:'Liberation Mono',monospace;-webkit-text-stroke:0.12px currentColor;">r</div><div class="t" style="left:568.0px;top:371.78px;font-size:8.33px;line-height:12px;color:#000;font-family:'Liberation Mono',monospace;-webkit-text-stroke:0.12px currentColor;">; sym</div><div class="t" style="left:598.0px;top:371.78px;font-size:8.33px;line-height:12px;color:#2a3fa8;font-family:'Liberation Mono',monospace;-webkit-text-stroke:0.12px currentColor;">r</div><div class="t" style="left:603.0px;top:371.78px;font-size:8.33px;line-height:12px;color:#000;font-family:'Liberation Mono',monospace;-webkit-text-stroke:0.12px currentColor;">; trans</div><div class="t" style="left:643.0px;top:371.78px;font-size:8.33px;line-height:12px;color:#2a3fa8;font-family:'Liberation Mono',monospace;-webkit-text-stroke:0.12px currentColor;">r</div><svg class="a" style="left:648.00px;top:372.00px;overflow:visible" width="5.0" height="10" viewBox="0 0 5.000 10" preserveAspectRatio="none"><path d="M1 1.6 H3.8 V9.6 H1 M2.6 1.6 V9.6" stroke="#000" stroke-width="0.735" fill="none"/></svg><svg class="a" style="left:658.00px;top:372.00px;overflow:visible" width="5.0" height="10" viewBox="0 0 5.000 10" preserveAspectRatio="none"><path d="M-0.5 4.3 H4 M-0.5 6.3 H4 M3 2.8 L5.5 5.3 L3 7.8" stroke="#000" stroke-width="1.3125" fill="none"/></svg><div class="t" style="left:523.0px;top:381.78px;font-size:8.33px;line-height:12px;color:#000;font-family:'Liberation Mono',monospace;-webkit-text-stroke:0.12px currentColor;">equiv</div><div class="t" style="left:553.0px;top:381.78px;font-size:8.33px;line-height:12px;color:#2a3fa8;font-family:'Liberation Mono',monospace;-webkit-text-stroke:0.12px currentColor;">A</div><div class="t" style="left:563.0px;top:381.78px;font-size:8.33px;line-height:12px;color:#2a3fa8;font-family:'Liberation Mono',monospace;-webkit-text-stroke:0.12px currentColor;">r</div><div class="a" style="left:672px;top:330px;width:9px;height:66.5px;background:#ececec;border:1px solid #c4c4c4"></div><div class="a" style="left:672px;top:339px;width:9px;height:6px;background:#c8c8c8;border-left:1px solid #b8b8b8;border-right:1px solid #b8b8b8"></div><div class="a" style="left:672px;top:330px;width:9px;height:9px;background:#fafafa;border:1px solid #c4c4c4"></div><div class="a" style="left:672px;top:387.5px;width:9px;height:9px;background:#fafafa;border:1px solid #c4c4c4"></div><svg class="a" style="left:672px;top:330px" width="9" height="9"><path d="M2 6 L4.5 3 L7 6Z" fill="#000"/></svg><svg class="a" style="left:672px;top:387.5px" width="9" height="9"><path d="M2 3 L4.5 6 L7 3Z" fill="#000"/></svg><div class="vsep" style="left:457px;top:404px;height:15px"></div><div class="t" style="left:462px;top:405.99px;font-size:8.7px;line-height:12px;color:#000;">Writable</div><div class="vsep" style="left:522.5px;top:404px;height:15px"></div><div class="t" style="left:527.5px;top:405.99px;font-size:8.7px;line-height:12px;color:#000;">Insert</div><div class="vsep" style="left:583.5px;top:404px;height:15px"></div><div class="t" style="left:589px;top:405.99px;font-size:8.7px;line-height:12px;color:#000;">108 : 2</div><div class="a" style="left:645px;top:403px;width:42px;height:17px;background:#e6e6e6;border:1px solid #b8b8b8"></div><div class="t" style="left:648px;top:405.99px;font-size:8.7px;line-height:12px;color:#8a8a8a;">proof (2)</div></body></html>
